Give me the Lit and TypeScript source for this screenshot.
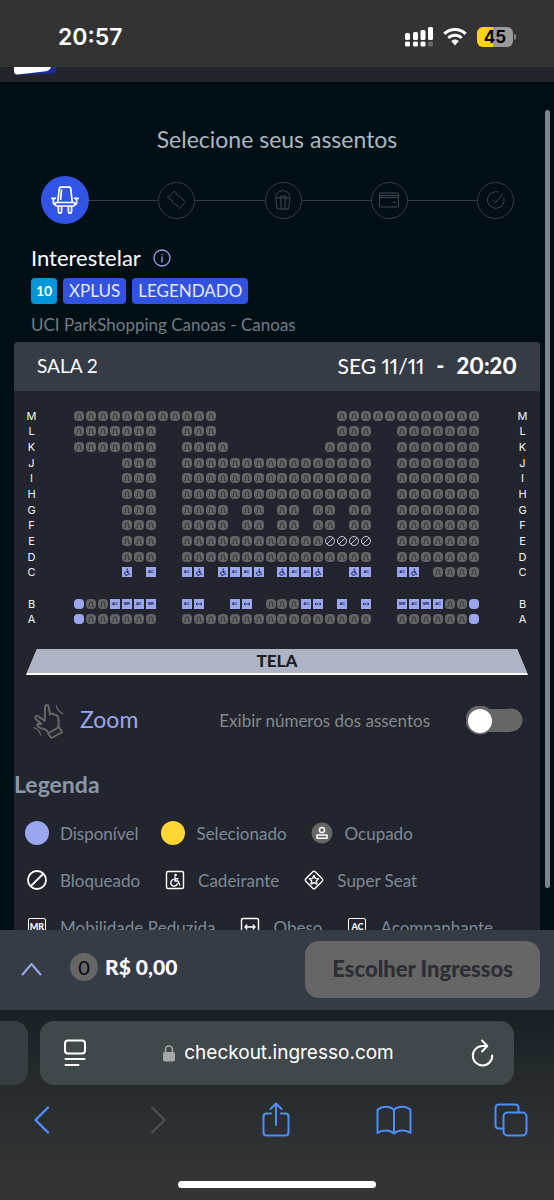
import { LitElement, html, svg, css, nothing } from "lit";
import { customElement, property, state } from "lit/decorators.js";
import { classMap } from "lit/directives/class-map.js";

/* Seat codes: o taken, f free, x blocked, w wheelchair, a companion, m reduced mobility, b wide seat */
const ROWS: Array<[string, string]> = [
  ["M", "oooooooooooo          oooooooooooo"],
  ["L", "ooooooo  ooo          ooo  ooooooo"],
  ["K", "ooooooo  oooo        oooo  ooooooo"],
  ["J", "    ooo  oooooooooooooooo  ooooooo"],
  ["I", "    ooo  oooooooooooooooo  ooooooo"],
  ["H", "    ooo  oooooooooooooooo  ooooooo"],
  ["G", "    ooo  oooo oo oo oo oo  ooooooo"],
  ["F", "    ooo  oooo oo oo oo oo  ooooooo"],
  ["E", "    ooo  ooooooooooooxxxx  ooooooo"],
  ["D", "    ooo  oooooooooooooooo  ooooooo"],
  ["C", "    w a  aw waaw waaw  wa  aw oooo"],
  ["", ""],
  ["B", "fooamam  ab  ab oooab a b  mamaoof"],
  ["A", "foooooo  oooooooooooooooo  oooooof"],
];

const SEAT_NAMES: Record<string, string> = {
  o: "ocupado",
  f: "disponível",
  x: "bloqueado",
  w: "cadeirante",
  a: "acompanhante",
  m: "mobilidade reduzida",
  b: "obeso",
};

const wheelchair = svg`
  <circle cx="9.6" cy="4" r="1.3" fill="currentColor" stroke="none"/>
  <path d="M9 6v4h3l1.8 4M9 7.8h3M7.4 8.4a3.4 3.4 0 1 0 4 4.4"/>`;

@customElement("seat-cell")
class SeatCell extends LitElement {
  @property() kind = "o";
  @property() name = "";

  static styles = css`
    :host { display: flex; align-items: center; justify-content: center; min-width: 0; }
    button {
      display: flex; align-items: center; justify-content: center;
      width: 10px; height: 10px; padding: 0; border: 0; border-radius: 4px;
      background: #646567; color: #16204e;
      font: 700 4px/10px "Liberation Sans", sans-serif;
    }
    .f { background: #9aa7ee; }
    .x { background: none; color: #c9ccd6; }
    .w, .a, .m, .b { background: #9aa7ee; border-radius: 0; }
    .o { color: #2e3033; }
    svg { display: block; width: 10px; height: 10px; fill: none; stroke: currentColor; }
  `;

  private glyph() {
    switch (this.kind) {
      case "o":
        return html`<svg viewBox="0 0 10 10"><path d="M3.500 6.500V4.200a1.500 1.500 0 0 1 3 0v2.300M2 7.300h2M6 7.300h2" stroke-width=".9"/></svg>`;
      case "x":
        return html`<svg viewBox="0 0 10 10"><circle cx="5" cy="5" r="4.500"/><path d="M2 8l6-6"/></svg>`;
      case "w":
        return html`<svg viewBox="0 0 18 18" stroke-width="1.7">${wheelchair}</svg>`;
      case "b":
        return html`<svg viewBox="0 0 10 10"><path d="M2 5h6M3.4 3.8 2 5l1.4 1.2M6.6 3.8 8 5 6.6 6.2" stroke-width=".8"/></svg>`;
      case "a":
        return "AC";
      case "m":
        return "MR";
      default:
        return nothing;
    }
  }

  render() {
    return html`<button
      class=${this.kind}
      ?disabled=${this.kind === "o" || this.kind === "x"}
      aria-label=${`${this.name} ${SEAT_NAMES[this.kind]}`}
    >${this.glyph()}</button>`;
  }
}

@customElement("seat-map")
class SeatMap extends LitElement {
  static styles = css`
    :host { display: flex; height: 219px; }
    .labels {
      display: grid; grid-template-rows: repeat(14, 1fr); width: 11px;
      align-items: center; justify-items: center;
      font: 400 11px/12px Inter, sans-serif; color: #f3f4f6;
    }
    .seats { flex: 1; display: grid; grid-template-rows: repeat(14, 1fr); margin: 0 37px 0 36px; }
    .row { display: grid; grid-template-columns: repeat(34, minmax(0, 1fr)); }
  `;

  render() {
    const labels = html`<div class="labels">${ROWS.map(([r]) => html`<span>${r}</span>`)}</div>`;
    return html`
      ${labels}
      <div class="seats">
        ${ROWS.map(([r, cells]) => html`<div class="row">
          ${[...cells].map((c, i) => c === " " ? html`<span></span>` : html`<seat-cell .kind=${c} .name=${r + (i + 1)}></seat-cell>`)}
        </div>`)}
      </div>
      ${labels}
    `;
  }
}

@customElement("step-bar")
class StepBar extends LitElement {
  static styles = css`
    :host { display: block; }
    ol { display: flex; align-items: center; list-style: none; margin: 0; padding: 0 40px 0 41px; }
    li { display: contents; }
    .dot {
      box-sizing: border-box; width: 37px; height: 37px; border-radius: 50%;
      border: 1px solid #343d44; color: #3f474e;
      display: flex; align-items: center; justify-content: center;
    }
    .active { width: 48px; height: 48px; border: 0; background: #3153e6; color: #fff; }
    .line { flex: 1; height: 1px; background: #343d44; }
    svg { display: block; fill: none; stroke: currentColor; stroke-linejoin: round; stroke-linecap: round; }
  `;

  render() {
    const icons = [
      html`<svg width="28" height="28" viewBox="0 0 28 28" stroke-width="1.700"><path d="M6.700 16.500 8.300 2.400q.2-1.200 1.400-1.200h8.600q1.200 0 1.400 1.200L21.300 16.500ZM10.500 4 9.600 13.500M.8 12.300h3.700M23.500 12.300h3.700M2.400 12.500V17q0 1.600 1.900 1.600M25.600 12.500V17q0 1.600-1.900 1.600M6.700 16.500H5.600q-1.300 0-1.300 1.200v1.100q0 1.200 1.300 1.200h16.800q1.300 0 1.300-1.200v-1.100q0-1.200-1.300-1.200H21.300M7.400 20.500v5.100a1.600 1.600 0 0 0 3.200 0V20.500M17.400 20.500v5.100a1.600 1.600 0 0 0 3.200 0V20.500"/></svg>`,
      html`<svg width="22" height="22" viewBox="0 0 22 22"><path d="M2 8.400 8.200 2.200l2 1.600a2.200 2.200 0 0 0 2.600 2.600l6.600 6.800-6 6.600-2-1.900a2.200 2.200 0 0 0-2.800-2.600L6.300 13a2.300 2.300 0 0 0-2.400-3Z"/></svg>`,
      html`<svg width="20" height="22" viewBox="0 0 20 22"><path d="M3 9h14l-1.500 11h-11ZM7.600 9l.6 11M12.400 9l-.6 11M3.600 8.600A2.400 2.400 0 0 1 4.800 4.600 2.600 2.600 0 0 1 8.200 2.200a3 3 0 0 1 4.600.6 2.400 2.400 0 0 1 3 2.400 2.200 2.200 0 0 1 .6 3.400M6.600 8.600a2 2 0 0 1 3.400-1 2 2 0 0 1 3.600 1"/></svg>`,
      html`<svg width="22" height="18" viewBox="0 0 22 18"><rect x="1.500" y="2" width="19" height="14" rx="1"/><path d="M1.500 4.500h19M1.500 6.500h19M15 11.500h2.500"/></svg>`,
      html`<svg width="20" height="20" viewBox="0 0 20 20"><path d="M12.500 2A8.400 8.400 0 1 0 18 8M6 9.600l3.400 3.200L16.600 4"/></svg>`,
    ];
    return html`<ol>${icons.map((icon, i) => html`<li>
      ${i ? html`<span class="line"></span>` : nothing}
      <span class=${classMap({ dot: true, active: i === 0 })}>${icon}</span>
    </li>`)}</ol>`;
  }
}

@customElement("app-root")
class AppRoot extends LitElement {
  @state() private numbers = false;

  static styles = css`
    :host {
      display: flex; flex-direction: column; height: 100vh; overflow: hidden;
      background: #020f15; color: #fff; font-family: Lato, sans-serif;
    }
    * { box-sizing: border-box; }
    button { font: inherit; color: inherit; background: none; border: 0; padding: 0; }
    svg { display: block; flex: none; fill: none; stroke: currentColor; stroke-linecap: round; stroke-linejoin: round; }
    .solid { fill: currentColor; stroke: none; }
    h1, h2, p { margin: 0; font-weight: 400; }

    .status {
      flex: none; display: flex; align-items: center; height: 67px; padding: 7px 41px 0 58px;
      background: #333; font: 600 23px/28px Inter, sans-serif;
    }
    .status time { flex: 1; }
    .signals { display: flex; align-items: center; gap: 10px; }
    .battery {
      position: relative; display: flex; align-items: center; justify-content: center;
      width: 36px; height: 20px; border-radius: 6px;
      background: linear-gradient(90deg, #fdd30d 45%, #9a9a9a 45%);
      color: #000; font: 700 17px/20px Inter, sans-serif;
    }
    .battery::after {
      content: ""; position: absolute; left: 37px; top: 7px; width: 2px; height: 6px;
      border-radius: 0 2px 2px 0; background: #8a8a8a;
    }
    .brand { flex: none; height: 15px; padding: 0 14px; background: #22252c; }

    main { position: relative; flex: 1; min-height: 0; overflow: hidden; padding: 42px 14px 0; }
    .scroll {
      position: absolute; right: 4px; top: 28px; bottom: 42px; width: 5px;
      border-radius: 3px; background: #7e848c;
    }
    h1 { font-size: 23px; line-height: 30px; text-align: center; color: #a9b8c3; }
    step-bar { margin: 22px -14px 0; }
    .movie { padding: 19px 17px 0; }
    .title { display: flex; align-items: center; gap: 12px; height: 30px; }
    .title h2 { font-size: 22px; line-height: 30px; }
    .info { color: #9aa7ee; }
    .tags { display: flex; gap: 6px; margin-top: 5px; }
    .tag {
      height: 26px; padding: 0 6px; border-radius: 4px; background: #3153e0; color: #e4e9ff;
      font-size: 17px; line-height: 26px;
    }
    .age { width: 26px; padding: 0; background: #0296d8; color: #fff; font-size: 14px; font-weight: 700; text-align: center; }
    .place { margin-top: 9px; font-size: 17px; line-height: 24px; color: #6f7d87; }

    .room { margin-top: 5px; border-radius: 4px 4px 0 0; background: #22252d; }
    .room-head {
      display: flex; align-items: center; height: 49px; padding: 0 23px 2px;
      border-radius: 4px 4px 0 0; background: #363c46; font-size: 19px; line-height: 24px;
    }
    .room-head .name { flex: 1; }
    .session { display: flex; gap: 12px; font-size: 21px; font-variant-numeric: proportional-nums; }
    .session b { font-weight: 900; font-size: 22px; }
    seat-map { margin: 17px 12px 0; }
    .screen {
      height: 26px; margin: 22px 12px 0; background: #fff;
      clip-path: polygon(11px 0, calc(100% - 11px) 0, 100% 100%, 0 100%);
    }
    .screen span {
      display: block; height: 24px; background: #aeb4c3; color: #1b2029; text-align: center;
      font-size: 17px; line-height: 23px; font-weight: 900;
    }
    .options { display: flex; align-items: center; height: 91px; padding: 0 17px 0 19px; }
    .zoom { display: flex; align-items: center; gap: 16px; color: #9aa7ee; font-size: 23px; line-height: 30px; }
    .zoom span { padding-bottom: 4px; }
    .zoom svg { color: #666; }
    .numbers { flex: 1; display: flex; align-items: center; justify-content: flex-end; gap: 36px; color: #85888d; font-size: 17px; line-height: 24px; }
    .switch {
      appearance: none; display: flex; align-items: center; flex: none; margin: 0;
      width: 57px; height: 29px; background: radial-gradient(circle at 14px 14px, #666 14px, transparent 15px),
        linear-gradient(#666, #666) 14px 3px / 31px 23px no-repeat, radial-gradient(circle at 45px 14px, #666 11px, transparent 12px);
    }
    .switch::before { content: ""; width: 24px; height: 24px; margin-left: 2px; border-radius: 50%; background: #fff; }
    .switch:checked::before { margin-left: 31px; }

    .legend h2 { padding-top: 3px; font-size: 23px; line-height: 30px; font-weight: 700; color: #8998a9; }
    .legend-row { display: flex; align-items: center; gap: 23px; height: 47px; padding-left: 11px; white-space: nowrap; }
    .legend h2 + .legend-row { margin-top: 10px; }
    .key { display: flex; align-items: center; gap: 11px; font-size: 17px; line-height: 24px; color: #7d8a98; }
    .word { padding-top: 2px; }
    .key svg { color: #fff; }
    .ball { width: 24px; height: 24px; border-radius: 50%; background: #9aa7ee; }
    .picked { background: #ffd633; }
    .box-icon {
      width: 18px; height: 18px; margin: 0 3px; border: 1px solid #fff; border-radius: 2px;
      color: #fff; font-size: 9px; line-height: 16px; font-weight: 900; text-align: center;
    }

    .cart {
      flex: none; display: flex; align-items: center; height: 80px; padding: 0 14px 2px 21px; background: #353c46;
    }
    .expand { color: #9aa7ee; }
    .count {
      width: 28px; height: 28px; margin-left: 28px; border-radius: 50%; background: #666; color: #08090b;
      font-size: 20px; line-height: 28px; text-align: center;
    }
    .total { flex: 1; margin-left: 7px; font-size: 21px; line-height: 24px; font-weight: 900; }
    .amount { flex: 1; display: flex; align-items: center; padding-bottom: 4px; }
    .choose {
      height: 57px; padding: 0 27px; border-radius: 14px; background: #666; color: #2c2e33;
      font-size: 22px; line-height: 24px; font-weight: 900;
    }

    .browser {
      flex: none; height: 190px; padding-top: 11px; background: linear-gradient(#182125, #2a2d2f 50%, #343434 90%);
      font-family: Inter, sans-serif;
    }
    .tabs { display: flex; gap: 12px; padding-right: 40px; }
    .prev { width: 28px; border-radius: 0 14px 14px 0; background: #363e41; }
    .address {
      flex: 1; display: flex; align-items: center; height: 64px; padding: 0 20px 0 24px;
      border-radius: 14px; background: #41484b;
    }
    .host {
      flex: 1; display: flex; align-items: center; justify-content: center; gap: 9px;
      font-size: 19px; line-height: 24px;
    }
    .tools { display: flex; align-items: center; justify-content: space-between; height: 70px; padding: 0 25px 0 23px; color: #4b90fa; }
    .tools button { display: flex; justify-content: center; width: 36px; }
    .tools .off { color: #505355; }
    .home { width: 198px; height: 7px; margin: 26px auto 0; border-radius: 4px; background: #fff; }
  `;

  private key(icon: unknown, text: string) {
    return html`<span class="key">${icon}<span class="word">${text}</span></span>`;
  }

  render() {
    return html`
      <div class="status">
        <time>20:57</time>
        <div class="signals">
          <svg class="solid" width="28" height="20" viewBox="0 0 28 20">
            <rect y="6" width="5" height="7" rx="1.500"/><rect x="8" y="5" width="5" height="8" rx="1.500"/>
            <rect x="15.500" y="3" width="5" height="10" rx="1.500"/><rect x="23" width="5" height="13" rx="1.500"/>
            <rect y="14.500" width="5" height="5" rx="1.500"/><rect x="8" y="14.500" width="5" height="5" rx="1.500"/>
            <rect x="15.500" y="14.500" width="5" height="5" rx="1.500"/><rect x="23" y="14.500" width="5" height="5" rx="1.500" fill="#666"/>
          </svg>
          <svg class="solid" width="24" height="18" viewBox="0 0 24 18">
            <path d="M12 0C7.400 0 3.300 1.700.300 4.700l2.100 2.200A13.600 13.600 0 0 1 12 3c3.700 0 7.100 1.500 9.600 3.900l2.100-2.200C20.700 1.700 16.600 0 12 0Z"/>
            <path d="M12 5.800c-3 0-5.700 1.100-7.700 3.100l2.100 2.200a8 8 0 0 1 11.200 0l2.100-2.200c-2-2-4.700-3.100-7.700-3.100Z"/>
            <path d="M12 11.500c-1.500 0-2.800.6-3.800 1.500L12 17.500l3.800-4.500c-1-.9-2.300-1.500-3.800-1.500Z"/>
          </svg>
          <div class="battery">45</div>
        </div>
      </div>
      <div class="brand">
        <svg class="solid" width="43" height="8" viewBox="0 0 43 8">
          <path d="M20 0h22v3q0 3-3 3.500L6 8Z" fill="#1c2b9c"/>
          <path d="M0 0h37q-1 3.600-5 4.200L4 7.500Q0 8 0 4Z" fill="#fff"/>
        </svg>
      </div>

      <main>
        <h1>Selecione seus assentos</h1>
        <step-bar></step-bar>

        <section class="movie">
          <div class="title">
            <h2>Interestelar</h2>
            <button class="info" aria-label="Informações">
              <svg width="18" height="18" viewBox="0 0 18 18" stroke-width="1.300"><circle cx="9" cy="9" r="8"/><path d="M9 8v5M9 5.300v.2"/></svg>
            </button>
          </div>
          <div class="tags">
            <span class="tag age">10</span><span class="tag">XPLUS</span><span class="tag">LEGENDADO</span>
          </div>
          <p class="place">UCI ParkShopping Canoas - Canoas</p>
        </section>

        <section class="room">
          <div class="room-head">
            <span class="name">SALA 2</span>
            <span class="session"><span>SEG 11/11</span><b>-</b><b>20:20</b></span>
          </div>
          <seat-map></seat-map>
          <div class="screen"><span>TELA</span></div>

          <div class="options">
            <button class="zoom">
              <svg width="31" height="36" viewBox="0 0 31 36" stroke-width="2">
                <path d="M15 29.500 13 26.700 7.500 25C4 23.500 3.500 21.500 5.500 20.800L8.500 21 3 16.200C1.200 14.200 3 12 5 13.200L11.800 17.800 12 4C12.200 1.400 15.200 1.400 15.600 3.600L17 11.500C18.500 9.800 20.400 10.200 21 11.800 23 11.300 24.400 12.200 25 14 26.200 17.500 26 20.500 25 24"/>
                <path d="M16 30 25 24.600q1-.5 1.600.4l2 3q.5 1-.4 1.600L19.300 34.600q-1 .5-1.600-.4l-2-2.800q-.6-.9.3-1.400Z"/>
                <path d="M23.300 2.700c.6 3.400 2.700 6.200 6.700 8M.8 24.700c3.600.8 5.700 3.300 6.900 7.300" stroke-width="1.300"/>
              </svg>
              <span>Zoom</span>
            </button>
            <label class="numbers">
              <span>Exibir números dos assentos</span>
              <input class="switch" type="checkbox" role="switch" .checked=${this.numbers}
                @change=${(e: Event) => (this.numbers = (e.target as HTMLInputElement).checked)}>
            </label>
          </div>

          <div class="legend">
            <h2>Legenda</h2>
            <div class="legend-row">
              ${this.key(html`<span class="ball"></span>`, "Disponível")}
              ${this.key(html`<span class="ball picked"></span>`, "Selecionado")}
              ${this.key(html`<svg width="24" height="24" viewBox="0 0 24 24" stroke-width="1.500"><circle cx="12" cy="12" r="10.500" fill="#666" stroke="none"/><circle cx="12" cy="9" r="2.600"/><path d="M7 17.300v-3.300h10v3.300Z"/></svg>`, "Ocupado")}
            </div>
            <div class="legend-row">
              ${this.key(html`<svg width="24" height="24" viewBox="0 0 24 24" stroke-width="1.800"><circle cx="12" cy="12" r="9"/><path d="M6 18 18 6"/></svg>`, "Bloqueado")}
              ${this.key(html`<svg width="24" height="24" viewBox="0 0 24 24" stroke-width="1.400"><rect x="3.500" y="3.500" width="17" height="17" rx="1.500"/><g transform="translate(3 3)">${wheelchair}</g></svg>`, "Cadeirante")}
              ${this.key(html`<svg width="24" height="24" viewBox="0 0 24 24" stroke-width="1.400"><path d="m10.800 3.800-7 7a1.700 1.700 0 0 0 0 2.400l7 7a1.700 1.700 0 0 0 2.400 0l7-7a1.700 1.700 0 0 0 0-2.400l-7-7a1.700 1.700 0 0 0-2.400 0Z"/><path d="m12 7.500 1.400 2.900 3.200.4-2.300 2.200.6 3.100-2.900-1.500-2.900 1.500.6-3.100-2.300-2.200 3.200-.4Z"/></svg>`, "Super Seat")}
            </div>
            <div class="legend-row">
              ${this.key(html`<span class="box-icon">MR</span>`, "Mobilidade Reduzida")}
              ${this.key(html`<svg width="24" height="24" viewBox="0 0 24 24" stroke-width="1.400"><rect x="3.500" y="3.500" width="17" height="17" rx="1.500"/><path d="M7 12h10M8.800 10 7 12l1.800 2M15.200 10l1.800 2-1.800 2"/></svg>`, "Obeso")}
              ${this.key(html`<span class="box-icon">AC</span>`, "Acompanhante")}
            </div>
          </div>
        </section>
        <div class="scroll"></div>
      </main>

      <div class="cart">
        <button class="expand" aria-label="Ver resumo">
          <svg width="21" height="14" viewBox="0 0 21 14" stroke-width="2"><path d="m1.500 12.500 9-10.500 9 10.500"/></svg>
        </button>
        <div class="amount"><span class="count">0</span><span class="total">R$ 0,00</span></div>
        <button class="choose">Escolher Ingressos</button>
      </div>

      <div class="browser">
        <div class="tabs">
          <div class="prev"></div>
          <div class="address">
            <button aria-label="Página">
              <svg width="22" height="28" viewBox="0 0 22 28" stroke-width="2"><rect x="1" y="1.500" width="20" height="13" rx="3"/><path d="M1.500 20h19M1.500 26h13"/></svg>
            </button>
            <button class="host">
              <svg width="12" height="17" viewBox="0 0 12 17" color="#a5a8aa"><rect y="7" width="12" height="9.500" rx="2" fill="currentColor" stroke="none"/><path d="M2.500 8V4.500a3.500 3.500 0 0 1 7 0V8" stroke-width="1.600"/></svg>
              <span>checkout.ingresso.com</span>
            </button>
            <button aria-label="Recarregar">
              <svg width="23" height="28" viewBox="0 0 23 28" stroke-width="2"><path d="M11.500 7A9.700 9.700 0 1 0 21.200 16.500M11.500 7h4.500M11 1.500l5.300 5.500-5.300 5.500"/></svg>
            </button>
          </div>
        </div>
        <div class="tools">
          <button aria-label="Voltar"><svg width="17" height="28" viewBox="0 0 17 28" stroke-width="2.400"><path d="M15 1.500 2.500 14 15 26.500"/></svg></button>
          <button class="off" aria-label="Avançar" disabled><svg width="17" height="28" viewBox="0 0 17 28" stroke-width="2"><path d="M2 1.500 14.500 14 2 26.500"/></svg></button>
          <button aria-label="Compartilhar"><svg width="28" height="36" viewBox="0 0 28 36" stroke-width="2"><path d="M9 11.500H4.500q-3 0-3 3v16q0 3 3 3h19q3 0 3-3v-16q0-3-3-3H19M14 23V1.500M8.500 7 14 1.500 19.500 7"/></svg></button>
          <button aria-label="Favoritos"><svg width="36" height="30" viewBox="0 0 36 30" stroke-width="2"><path d="M18 28.500V5C14.500.500 5.500.500 1.500 5v23c4.500-3.500 12.500-3.500 16.500.5 4-4 12-4 16.500-.5V5C30.500.500 21.500.500 18 5V28.500"/></svg></button>
          <button aria-label="Abas"><svg width="34" height="34" viewBox="0 0 34 34" stroke-width="2"><rect x="9.500" y="9.500" width="23" height="23" rx="4"/><path d="M9.500 25.500H5q-3.500 0-3.500-3.500V5Q1.500 1.500 5 1.500h16q3.500 0 3.500 3.500v4.500"/></svg></button>
        </div>
        <div class="home"></div>
      </div>
    `;
  }
}
